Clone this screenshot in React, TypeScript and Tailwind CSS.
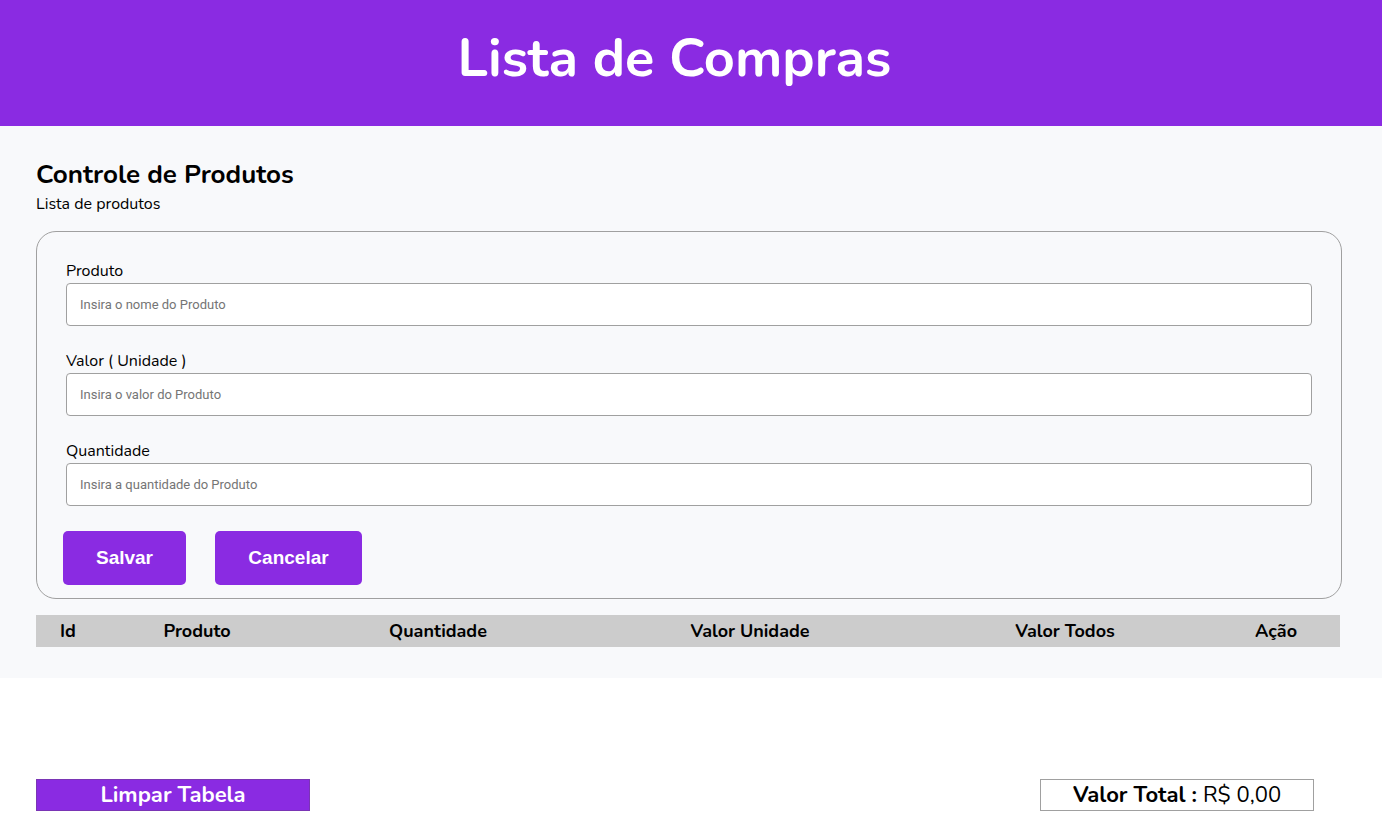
import React from 'react';

const head = "font-['Nunito','Lato','Noto_Sans',sans-serif]";

const Field = ({ label, placeholder }: { label: string; placeholder: string }) => (
  <div className="flex flex-col">
    <label className={`${head} text-[16px] text-black leading-[20px] mb-[2px]`}>{label}</label>
    <input
      type="text"
      placeholder={placeholder}
      className="h-[43px] w-full rounded-[4px] border border-[#a0a0a0] bg-white px-[13px] text-[13px] font-['Roboto',sans-serif] placeholder:text-[#757575] outline-none"
    />
  </div>
);

export default function App() {
  return (
    <div className="min-h-screen bg-white">
      <header className="flex h-[126px] items-center justify-center bg-[#8a2be2] pr-[33px]">
        <h1 className={`${head} text-[54px] font-bold text-white leading-none -mt-[10px]`}>Lista de Compras</h1>
      </header>

      <main className="bg-[#f8f9fb] px-[36px] pt-[34px] pb-[31px]">
        <h2 className={`${head} text-[26px] font-bold text-black leading-[30px]`}>Controle de Produtos</h2>
        <p className={`${head} text-[16px] text-black leading-[20px] mt-[4px]`}>Lista de produtos</p>

        <form
          className="mt-[17px] mr-[4px] flex flex-col gap-[25px] rounded-[20px] border border-[#a0a0a0] px-[29px] pt-[29px] pb-[13px]"
          onSubmit={(e) => e.preventDefault()}
        >
          <Field label="Produto" placeholder="Insira o nome do Produto" />
          <Field label="Valor ( Unidade )" placeholder="Insira o valor do Produto" />
          <Field label="Quantidade" placeholder="Insira a quantidade do Produto" />
          <div className="-ml-[3px] flex gap-[29px]">
            <button
              type="submit"
              className="h-[54px] w-[123px] rounded-[5px] bg-[#8a2be2] font-['Liberation_Sans',Arial,sans-serif] text-[19px] font-bold text-white"
            >
              Salvar
            </button>
            <button
              type="button"
              className="h-[54px] w-[147px] rounded-[5px] bg-[#8a2be2] font-['Liberation_Sans',Arial,sans-serif] text-[19px] font-bold text-white"
            >
              Cancelar
            </button>
          </div>
        </form>

        <div
          className={`${head} mt-[16px] mr-[6px] grid h-[32px] grid-cols-[64px_194px_288px_336px_294px_1fr] items-center bg-[#cccccc] text-[18px] font-bold text-black`}
        >
          <span className="text-center">Id</span>
          <span className="text-center">Produto</span>
          <span className="text-center">Quantidade</span>
          <span className="text-center">Valor Unidade</span>
          <span className="text-center">Valor Todos</span>
          <span className="text-center">Ação</span>
        </div>
      </main>

      <div className="mt-[101px] flex items-center justify-between pl-[36px] pr-[68px]">
        <button
          className={`${head} h-[32px] w-[274px] border border-[#7a35b5] bg-[#8a2be2] text-[22px] font-bold text-white leading-none`}
        >
          Limpar Tabela
        </button>
        <div
          className={`${head} flex h-[32px] w-[274px] items-center justify-center border border-[#a0a0a0] bg-white text-[22px] text-black`}
        >
          <span className="font-bold">Valor Total :</span>
          <span className="ml-[6px]">R$ 0,00</span>
        </div>
      </div>
    </div>
  );
}
